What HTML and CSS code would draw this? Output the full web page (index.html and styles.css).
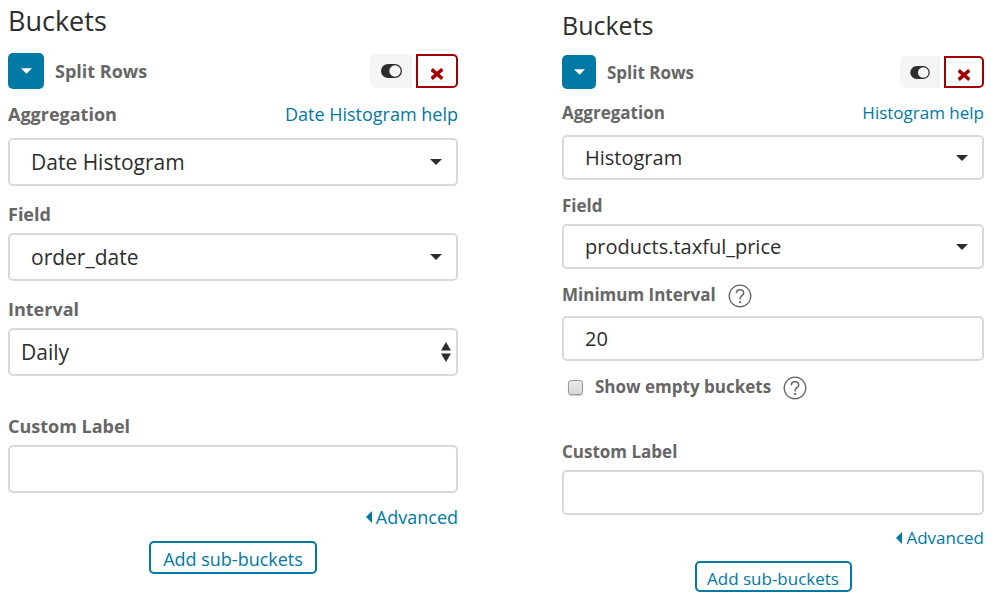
FILE: index.html
```html
<!DOCTYPE html>
<html lang="en">
<head>
<meta charset="utf-8">
<title>Buckets</title>
<link rel="stylesheet" href="styles.css">
</head>
<body>
<svg class="defs" aria-hidden="true">
  <symbol id="down" viewBox="0 0 12 6"><path d="M0 0H12L6 6Z"/></symbol>
  <symbol id="left" viewBox="0 0 6 12"><path d="M6 0V12L0 6Z"/></symbol>
  <symbol id="updown" viewBox="0 0 10 20"><path d="M5 0L10 8.500H0ZM0 11.500H10L5 20Z"/></symbol>
  <symbol id="toggle" viewBox="0 0 21 14"><path fill-rule="evenodd" d="M7 0H14A7 7 0 0 1 14 14H7A7 7 0 0 1 7 0ZM14 1.300A5.700 5.700 0 1 0 14 12.700A5.700 5.700 0 1 0 14 1.300Z"/></symbol>
  <symbol id="cross" viewBox="0 0 12 12"><path d="M2 2.500L10 9.500M10 2.500L2 9.500" fill="none" stroke="currentColor" stroke-width="3.600" stroke-linecap="square"/></symbol>
  <symbol id="help" viewBox="0 0 24 24"><g fill="none" stroke="currentColor" stroke-width="1.300"><circle cx="12" cy="12" r="10.800"/><path d="M8.400 9.200C8.400 7 9.900 5.800 12 5.800C14.200 5.800 15.700 7.100 15.700 9C15.700 11.700 12.100 11.700 12.100 14.800V15.600" stroke-width="1.500"/></g><circle cx="12.100" cy="18.200" r="1.100"/></symbol>
</svg>
<main class="panels">
  <form class="panel panel-large">
    <h2 class="title">Buckets</h2>
    <div class="head">
      <button type="button" class="collapse" aria-label="Collapse"><svg class="caret"><use href="#down"/></svg></button>
      <span class="name">Split Rows</span>
      <button type="button" class="toggle" aria-label="Disable"><svg><use href="#toggle"/></svg></button>
      <button type="button" class="remove" aria-label="Remove"><svg><use href="#cross"/></svg></button>
    </div>
    <div class="field">
      <div class="label-row first"><label for="agg1">Aggregation</label><a href="#help">Date Histogram help</a></div>
      <div class="control"><select id="agg1"><option>Date Histogram</option></select><svg class="arrow"><use href="#down"/></svg></div>
    </div>
    <div class="field">
      <div class="label-row"><label for="field1">Field</label></div>
      <div class="control"><select id="field1"><option>order_date</option></select><svg class="arrow"><use href="#down"/></svg></div>
    </div>
    <div class="field">
      <div class="label-row"><label for="interval">Interval</label></div>
      <div class="control"><select id="interval" class="plain"><option>Daily</option></select><svg class="spin"><use href="#updown"/></svg></div>
    </div>
    <div class="field custom">
      <div class="label-row"><label for="custom1">Custom Label</label></div>
      <div class="control"><input type="text" id="custom1"></div>
    </div>
    <a class="advanced" href="#advanced"><svg><use href="#left"/></svg>Advanced</a>
    <button type="button" class="add">Add sub-buckets</button>
  </form>
  <form class="panel panel-small">
    <h2 class="title">Buckets</h2>
    <div class="head">
      <button type="button" class="collapse" aria-label="Collapse"><svg class="caret"><use href="#down"/></svg></button>
      <span class="name">Split Rows</span>
      <button type="button" class="toggle" aria-label="Disable"><svg><use href="#toggle"/></svg></button>
      <button type="button" class="remove" aria-label="Remove"><svg><use href="#cross"/></svg></button>
    </div>
    <div class="field">
      <div class="label-row first"><label for="agg2">Aggregation</label><a href="#help">Histogram help</a></div>
      <div class="control"><select id="agg2"><option>Histogram</option></select><svg class="arrow"><use href="#down"/></svg></div>
    </div>
    <div class="field">
      <div class="label-row"><label for="field2">Field</label></div>
      <div class="control"><select id="field2"><option>products.taxful_price</option></select><svg class="arrow"><use href="#down"/></svg></div>
    </div>
    <div class="field">
      <div class="label-row with-help"><label for="min">Minimum Interval</label><svg class="help"><use href="#help"/></svg></div>
      <div class="control"><input type="text" id="min" value="20"></div>
    </div>
    <div class="check-row"><input type="checkbox" id="empty"><label for="empty">Show empty buckets</label><svg class="help"><use href="#help"/></svg></div>
    <div class="field custom">
      <div class="label-row"><label for="custom2">Custom Label</label></div>
      <div class="control"><input type="text" id="custom2"></div>
    </div>
    <a class="advanced" href="#advanced"><svg><use href="#left"/></svg>Advanced</a>
    <button type="button" class="add">Add sub-buckets</button>
  </form>
</main>
</body>
</html>
```
FILE: styles.css
```css
* { box-sizing: border-box; }
body { margin: 0; background: #fff; color: #2d2d2d; font-family: "Open Sans", sans-serif; }
svg { display: block; fill: currentColor; flex: none; }
.defs { position: absolute; width: 0; height: 0; }
a { color: #0079a5; text-decoration: none; }
button, input, select { margin: 0; font-family: inherit; }
button { padding: 0; cursor: pointer; }

.panels { display: grid; grid-template-columns: 450fr 422fr; column-gap: 104px; align-items: start; padding: 0 13px 0 8px; }
.panel { display: flex; flex-direction: column; }
.panel-large {
  --title: 27px; --label: 18px; --link: 18px; --text: 21px;
  --line: 24px; --box: 48px; --square: 36px; --action: 34px; --action-width: 42px;
  --gap: 16px; --custom-gap: 38px; --head-gap: 13px; --first-gap: 12px; --add: 33px; --add-width: 168px;
  padding-top: 3px;
}
.panel-small {
  --title: 25px; --label: 17px; --link: 17px; --text: 20px;
  --line: 22px; --box: 45px; --square: 34px; --action: 32px; --action-width: 40px;
  --gap: 15px; --custom-gap: 43px; --head-gap: 13px; --first-gap: 11px; --add: 31px; --add-width: 157px;
  padding-top: 7px;
}

.title { margin: 0 0 12px; font-size: var(--title); font-weight: 400; line-height: 36px; }
.head { display: flex; align-items: center; height: var(--square); margin-bottom: var(--head-gap); }
.panel-large .head { margin-top: 2px; }
.collapse { display: grid; place-items: center; width: var(--square); height: var(--square); border: 0; border-radius: 5px; background: #0079a5; color: #fff; }
.caret { width: 11px; height: 6px; }
.name { margin-left: 11px; font-size: var(--label); font-weight: 700; color: #666; }
.toggle, .remove { display: grid; place-items: center; width: var(--action-width); height: var(--action); }
.toggle { margin-left: auto; margin-right: 4px; border: 0; border-radius: 5px 0 0 5px; background: #f5f5f5; color: #2d2d2d; }
.toggle svg { width: 21px; height: 14px; }
.panel-small .toggle svg { width: 20px; height: 13px; }
.remove { padding-top: 5px; border: 2px solid #a30000; border-radius: 0 5px 5px 0; background: #fff; color: #a30000; }
.remove svg { width: 12px; height: 12px; }

.field { margin-bottom: var(--gap); }
.label-row { display: flex; align-items: center; justify-content: space-between; height: var(--line); margin-bottom: 7px; }
.label-row.first { margin-bottom: var(--first-gap); }
.label-row.with-help { justify-content: flex-start; margin-bottom: 10px; }
label { font-size: var(--label); font-weight: 700; color: #666; line-height: var(--line); }
.label-row a, .advanced { font-size: var(--link); line-height: var(--line); }
.help { width: 24px; height: 24px; margin-left: 12px; margin-top: 2px; color: #666; }

.control { position: relative; }
.control input, .control select { display: block; width: 100%; height: var(--box); padding: 0 21px; border: 2px solid #d9d9d9; border-radius: 5px; background: #fff; color: #2d2d2d; font-size: var(--text); appearance: none; }
.control .plain { padding-left: 11px; }
.arrow, .spin { position: absolute; top: 50%; transform: translateY(-50%); pointer-events: none; }
.arrow { right: 16px; width: 12px; height: 6px; }
.spin { right: 7px; width: 10px; height: 20px; }

.check-row { display: flex; align-items: center; height: var(--line); }
.check-row input { appearance: none; width: 15px; height: 15px; margin: 0 12px 0 6px; border: 1px solid #999; border-radius: 3px; background: linear-gradient(#e9e9e9, #d9d9d9); box-shadow: 0 1px 1px #ccc; }
.custom { margin-top: calc(var(--custom-gap) - var(--gap)); margin-bottom: 12px; }
.check-row + .custom { margin-top: var(--custom-gap); }

.advanced { display: flex; align-items: center; align-self: flex-end; gap: 4px; margin-bottom: 12px; }
.advanced svg { width: 6px; height: 12px; }
.add { align-self: center; width: var(--add-width); height: var(--add); padding-top: 3px; border: 2px solid #0079a5; border-radius: 5px; background: #fff; color: #0079a5; font-size: var(--link); line-height: 1; }
```
